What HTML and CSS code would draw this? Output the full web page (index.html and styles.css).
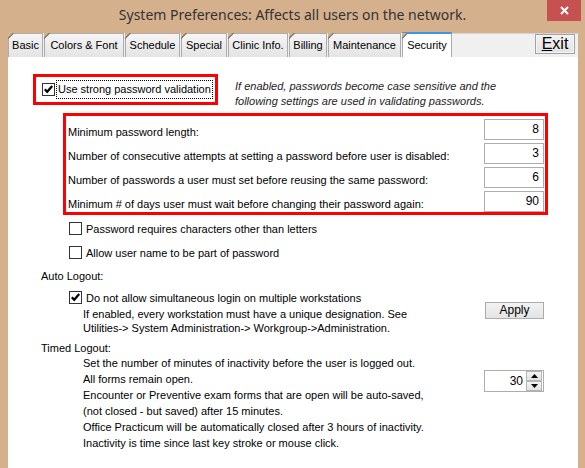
FILE: index.html
```html
<!DOCTYPE html>
<html>
<head>
<meta charset="utf-8">
<link rel="stylesheet" href="styles.css">
</head>
<body>
<div class="window">
  <div class="titlebar">
    <div class="title">System Preferences: Affects all users on the network.</div>
    <div class="close"><svg width="9" height="9" viewBox="0 0 9 9"><path d="M1 1L8 8M8 1L1 8" stroke="#fff" stroke-width="2"/></svg></div>
  </div>
  <div class="frame">
    <div class="tabstrip">
      <div class="tab t-basic">Basic</div>
      <div class="tab t-colors">Colors &amp; Font</div>
      <div class="tab t-schedule">Schedule</div>
      <div class="tab t-special">Special</div>
      <div class="tab t-clinic">Clinic Info.</div>
      <div class="tab t-billing">Billing</div>
      <div class="tab t-maint">Maintenance</div>
      <div class="tab active t-security">Security</div>
      <div class="rest"><div class="exit"><u>E</u>xit</div></div>
    </div>
    <div class="page">
      <div class="row1">
        <div class="redbox strong">
          <span class="cb"><svg width="13" height="13" viewBox="0 0 13 13"><rect x="0.5" y="0.5" width="12" height="12" fill="#fff" stroke="#333"/><path d="M2.8 6.2L5.2 8.8L10.2 3" fill="none" stroke="#000" stroke-width="2.2"/></svg></span>
          <span class="focus">Use strong password validation</span>
        </div>
        <div class="note">If enabled, passwords become case sensitive and the<br>following settings are used in validating passwords.</div>
      </div>
      <div class="redbox rules">
        <div class="rule"><span class="rlabel">Minimum password length:</span><span class="num">8</span></div>
        <div class="rule"><span class="rlabel">Number of consecutive attempts at setting a password before user is disabled:</span><span class="num">3</span></div>
        <div class="rule"><span class="rlabel">Number of passwords a user must set before reusing the same password:</span><span class="num">6</span></div>
        <div class="rule"><span class="rlabel">Minimum # of days user must wait before changing their password again:</span><span class="num">90</span></div>
      </div>
      <div class="check opt1">
        <span class="cb"><svg width="13" height="13" viewBox="0 0 13 13"><rect x="0.5" y="0.5" width="12" height="12" fill="#fff" stroke="#333"/></svg></span>
        <span>Password requires characters other than letters</span>
      </div>
      <div class="check opt2">
        <span class="cb"><svg width="13" height="13" viewBox="0 0 13 13"><rect x="0.5" y="0.5" width="12" height="12" fill="#fff" stroke="#333"/></svg></span>
        <span>Allow user name to be part of password</span>
      </div>
      <div class="heading auto-h">Auto Logout:</div>
      <div class="auto">
        <div class="auto-left">
          <div class="check">
            <span class="cb"><svg width="13" height="13" viewBox="0 0 13 13"><rect x="0.5" y="0.5" width="12" height="12" fill="#fff" stroke="#333"/><path d="M2.8 6.2L5.2 8.8L10.2 3" fill="none" stroke="#000" stroke-width="2.2"/></svg></span>
            <span>Do not allow simultaneous login on multiple workstations</span>
          </div>
          <div class="info">If enabled, every workstation must have a unique designation. See<br>Utilities-&gt; System Administration-&gt; Workgroup-&gt;Administration.</div>
        </div>
        <div class="apply">Apply</div>
      </div>
      <div class="heading timed-h">Timed Logout:</div>
      <div class="timed">
        <div class="lines">Set the number of minutes of inactivity before the user is logged out.<br>All forms remain open.<br>Encounter or Preventive exam forms that are open will be auto-saved,<br>(not closed - but saved) after 15 minutes.<br>Office Practicum will be automatically closed after 3 hours of inactivity.<br>Inactivity is time since last key stroke or mouse click.</div>
        <div class="spin">
          <span class="spinval">30</span>
          <span class="spinbtns">
            <span class="sbtn"><svg width="7" height="4" viewBox="0 0 7 4"><path d="M0 4L3.5 0L7 4Z" fill="#000"/></svg></span>
            <span class="sbtn"><svg width="7" height="4" viewBox="0 0 7 4"><path d="M0 0L3.5 4L7 0Z" fill="#000"/></svg></span>
          </span>
        </div>
      </div>
    </div>
  </div>
</div>
</body>
</html>
```
FILE: styles.css
```css
* { box-sizing: border-box; }
body {
  margin: 0;
  font-family: "Liberation Sans", Arial, sans-serif;
  font-size: 11px;
  color: #000;
}
.window {
  width: 585px;
  height: 468px;
  background: #d5b08c;
  position: relative;
  overflow: hidden;
}
.titlebar {
  height: 32px;
  position: relative;
}
.title {
  text-align: center;
  font-family: "Noto Sans", sans-serif;
  font-size: 14px;
  line-height: 30px;
  color: #333;
}
.close {
  position: absolute;
  top: 0;
  left: 547px;
  width: 34px;
  height: 21px;
  background: #c75050;
  display: flex;
  align-items: center;
  justify-content: center;
}
.frame {
  margin-left: 8px;
  width: 570px;
  height: 436px;
  display: flex;
  flex-direction: column;
}
.tabstrip {
  height: 25px;
  display: flex;
  align-items: flex-end;
  gap: 1px;
  background: linear-gradient(#d5b08c 1px, #f0f0f0 1px);
}
.tab {
  position: relative;
  height: 24px;
  border: 1px solid #acacac;
  border-bottom: none;
  background: linear-gradient(#f5f5f5, #e4e4e4);
  text-align: center;
  line-height: 22px;
  white-space: nowrap;
}
.tab::before {
  content: "";
  position: absolute;
  left: -1px;
  top: -1px;
  width: 6px;
  height: 6px;
  background: linear-gradient(135deg, #d5b08c 0 38%, #808080 38% 58%, transparent 58%);
}
.tab.active {
  height: 25px;
  background: #fff;
  border-top: 2px solid #3d94e9;
  line-height: 22px;
}
.t-basic { width: 35px; }
.t-colors { width: 80px; }
.t-schedule { width: 55px; }
.t-special { width: 46px; }
.t-clinic { width: 60px; }
.t-billing { width: 38px; }
.t-maint { width: 73px; }
.t-security { width: 50px; }
.rest {
  flex: 1;
  height: 24px;
  border-top: 1px solid #d4d4d4;
  display: flex;
  justify-content: flex-end;
  padding-right: 3px;
  margin-left: -1px;
}
.exit {
  width: 40px;
  height: 20px;
  border: 1px solid #a3a3a3;
  box-shadow: inset 0 0 0 1px #f4f4f4;
  background: linear-gradient(#f3f3f3, #e3e3e3);
  font-size: 16px;
  line-height: 18px;
  text-align: center;
}
.page {
  flex: 1;
  background: #fff;
  display: flex;
  flex-direction: column;
  align-items: flex-start;
}
.row1 {
  display: flex;
  align-items: flex-start;
  height: 31px;
  margin: 17px 0 0 25px;
}
.redbox {
  border: 3px solid #f00;
}
.strong {
  width: 185px;
  height: 31px;
  display: flex;
  align-items: center;
  padding-left: 6px;
  gap: 2px;
}
.cb {
  display: block;
  width: 13px;
  height: 13px;
  flex: none;
}
.cb svg { display: block; }
.focus {
  outline: 1px dotted #000;
  outline-offset: 0;
  padding: 1px 1px;
  line-height: 15px;
  white-space: nowrap;
}
.note {
  margin: 5px 0 0 17px;
  font-style: italic;
  line-height: 14.5px;
  color: #222;
}
.rules {
  align-self: stretch;
  margin: 8px 30px 0 55px;
  height: 102px;
  padding: 3px 1px 0 2px;
  display: flex;
  flex-direction: column;
  gap: 3px;
}
.rule {
  display: flex;
  justify-content: space-between;
  height: 21px;
}
.rlabel {
  padding-top: 6px;
  line-height: 14px;
  white-space: nowrap;
}
.num {
  width: 60px;
  height: 21px;
  border: 1px solid #adadad;
  text-align: right;
  padding-right: 4px;
  line-height: 19px;
  font-size: 12px;
}
.check {
  display: flex;
  align-items: center;
  gap: 4px;
  height: 13px;
  line-height: 14px;
  white-space: nowrap;
}
.opt1 { margin: 7px 0 0 61px; }
.opt2 { margin: 11px 0 0 61px; }
.heading {
  margin-left: 33px;
  line-height: 14px;
}
.auto-h { margin-top: 10px; }
.auto {
  align-self: stretch;
  display: flex;
  align-items: flex-start;
  margin: 8px 34px 0 61px;
}
.info {
  margin: 3px 0 0 14px;
  line-height: 14px;
}
.apply {
  margin: 11px 0 0 auto;
  width: 59px;
  height: 17px;
  border: 1px solid #acacac;
  background: linear-gradient(#f2f2f2, #e4e4e4);
  text-align: center;
  line-height: 15px;
  font-size: 12px;
}
.timed-h { margin-top: 6px; }
.timed {
  align-self: stretch;
  display: flex;
  align-items: flex-start;
  margin: 0 34px 0 75px;
}
.lines {
  line-height: 16px;
}
.spin {
  margin: 15px 0 0 auto;
  width: 60px;
  height: 22px;
  border: 1px solid #adadad;
  display: flex;
  padding-right: 1px;
}
.spinval {
  flex: 1;
  text-align: right;
  padding-right: 3px;
  line-height: 20px;
  font-size: 12px;
}
.spinbtns {
  width: 16px;
  display: flex;
  flex-direction: column;
}
.sbtn {
  height: 10px;
  border: 1px solid #b5b5b5;
  background: linear-gradient(#f4f4f4, #e2e2e2);
  display: flex;
  align-items: center;
  justify-content: center;
}
.sbtn svg { display: block; }
```
